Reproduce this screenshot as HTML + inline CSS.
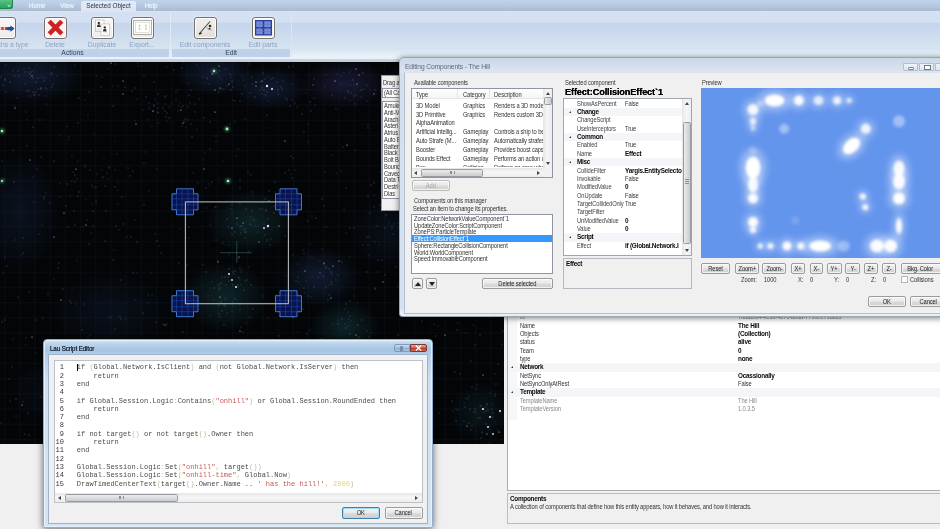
<!DOCTYPE html>
<html><head><meta charset="utf-8">
<style>
*{box-sizing:border-box;margin:0;padding:0}
html,body{width:940px;height:529px;overflow:hidden;background:#f0f0f0;font-family:"Liberation Sans",sans-serif;font-size:7px;color:#222}
.abs,.t,.b{position:absolute}
#root{position:relative;width:940px;height:529px;overflow:hidden;filter:blur(.35px)}
.t{transform:scaleX(.85);transform-origin:0 50%;white-space:nowrap;line-height:8px;height:8px;font-size:6.8px;letter-spacing:-.15px;color:#333}
.bd{font-weight:bold;color:#0a0a0a;transform:scaleX(.94)}
/* ribbon */
#tabbar{left:0;top:0;width:940px;height:11.500px;background:linear-gradient(#bfd4ec,#b3c6de 55%,#a7b7cb)}
#ribbon{left:0;top:11px;width:940px;height:50.500px;background:linear-gradient(#dbe7f5 0,#d5e1f2 1px,#d4e0f1 11px,#c5d5ec 12.500px,#cddbed 24px,#d7e4f0 38px,#e5f1f8 44px,#e9f2f9 47.500px,#ccd5e2 48px,#c4cedb 50.500px)}
.tab{top:.5px;height:11px;font-size:6.300px;color:#e6edf6;text-align:center;line-height:10px;text-shadow:0 0 1px #fff}
.tabsel{background:linear-gradient(#e3ebf5,#dbe5f3);color:#1d2b44;border-radius:2px 2px 0 0;text-shadow:none}
.grp{top:49px;height:8px;background:#bfd1e8;font-size:6.8px;text-align:center;line-height:8px;color:#30435e}
.ico{top:17.200px;width:23px;height:21.500px;border:1.200px solid #707276;border-radius:3px;background:linear-gradient(#f8f7f5,#eeece8);box-shadow:inset 0 0 0 1px #fff,0 0 1.500px rgba(255,255,255,.9)}
.ico svg{position:absolute;left:0;top:0}
.ilab{top:41px;font-size:6.8px;color:#8ba3c4;text-align:center;width:70px;line-height:8px;height:8px}
/* space */
#space{left:0;top:61.500px;width:504px;height:383px;background:#030507;overflow:hidden}
/* controls */
.btn{border:1px solid #9a9b9c;border-radius:2px;background:linear-gradient(#f2f2f2 0%,#e9e9e9 48%,#dbdbdb 52%,#d0d0d0 100%);box-shadow:inset 0 0 0 1px rgba(255,255,255,.7);font-size:6.800px;letter-spacing:-.15px;line-height:9.500px;text-align:center;color:#222;white-space:nowrap;overflow:hidden}
.sbv{background:linear-gradient(90deg,#e6e6e6,#f6f6f6 50%,#ececec)}
.sbh{background:linear-gradient(#e6e6e6,#f6f6f6 50%,#ececec)}
.thumb{border:1px solid #979aa0;border-radius:1.500px;background:linear-gradient(90deg,#ececec,#c9cbcf)}
.sbh+.thumb,.thumbh{background:linear-gradient(#ececec,#c9cbcf)}
.arr{width:0;height:0;border-left:2px solid transparent;border-right:2px solid transparent}
.arrh{width:0;height:0;border-top:2px solid transparent;border-bottom:2px solid transparent}
.code{font-family:"Liberation Mono",monospace;font-size:7px;color:#4a4a4a;white-space:normal;font-size:0}
.ln{height:8.340px;line-height:8.340px;white-space:pre;font-size:7px}
.no{display:inline-block;width:9px;margin-right:12.800px;text-align:right;color:#333}
.code i{font-style:normal;color:#c2bd98}.code b{font-weight:normal;color:#c85858}.code u{text-decoration:none;color:#dfcd92}
.s{display:inline-block;transform:scaleX(.85)}
</style></head><body><div id="root">

<!-- ===== SPACE VIEWPORT ===== -->
<div id="space" class="abs">
<svg width="504" height="383" viewBox="0 0 504 383" style="position:absolute;left:0;top:0">
<defs>
<radialGradient id="nb" cx="50%" cy="50%" r="50%"><stop offset="0" stop-color="#16243f" stop-opacity=".7"/><stop offset="1" stop-color="#1c2e4e" stop-opacity="0"/></radialGradient>
<radialGradient id="nt" cx="50%" cy="50%" r="50%"><stop offset="0" stop-color="#123034" stop-opacity=".7"/><stop offset="1" stop-color="#16363a" stop-opacity="0"/></radialGradient>
<radialGradient id="np" cx="50%" cy="50%" r="50%"><stop offset="0" stop-color="#23234a" stop-opacity=".65"/><stop offset="1" stop-color="#2a2a55" stop-opacity="0"/></radialGradient>
<pattern id="grid" width="15.200" height="15.200" x="4" y="12" patternUnits="userSpaceOnUse"><path d="M0 .5H15.200M.5 0V15.200" stroke="#182338" stroke-width=".7" opacity=".32" fill="none"/></pattern>
<g id="cube">
<path d="M-8.500 -13h17v5h4.500v16h-4.500v5h-17v-5h-4.500v-16h4.500z" fill="#0c1a70" opacity=".68"/>
<path d="M-8.500 -13h17v5h4.500v16h-4.500v5h-17v-5h-4.500v-16h4.500z" fill="none" stroke="#4682dc" stroke-width="1" opacity=".9"/>
<path d="M-8.500 -8h17v16h-17zM-13 -3h26M-13 3h26M-3 -13v26M3 -13v26M-8.500 -8l-4.500 0M8.500 8h4.500" fill="none" stroke="#2a58bc" stroke-width=".7" opacity=".6"/>
</g>
</defs>
<ellipse cx="30" cy="14" rx="55" ry="28" fill="url(#nb)"/>
<ellipse cx="215" cy="12" rx="40" ry="22" fill="url(#nb)"/>
<ellipse cx="270" cy="26" rx="38" ry="22" fill="url(#nb)"/>
<ellipse cx="345" cy="22" rx="45" ry="24" fill="url(#np)"/>
<ellipse cx="440" cy="20" rx="60" ry="26" fill="url(#nb)"/>
<ellipse cx="20" cy="150" rx="40" ry="60" fill="url(#nb)" opacity=".6"/>
<ellipse cx="110" cy="250" rx="60" ry="40" fill="url(#nb)" opacity=".5"/>
<ellipse cx="250" cy="160" rx="45" ry="32" fill="url(#nt)"/>
<ellipse cx="225" cy="235" rx="45" ry="35" fill="url(#nt)"/>
<ellipse cx="320" cy="215" rx="40" ry="30" fill="url(#nb)"/>
<ellipse cx="345" cy="265" rx="35" ry="28" fill="url(#nt)"/>
<ellipse cx="80" cy="330" rx="70" ry="40" fill="url(#nb)" opacity=".6"/>
<ellipse cx="400" cy="170" rx="50" ry="40" fill="url(#nb)" opacity=".5"/>
<ellipse cx="480" cy="350" rx="32" ry="30" fill="url(#nt)" opacity=".6"/>
<ellipse cx="380" cy="330" rx="50" ry="30" fill="url(#nb)" opacity=".6"/>
<rect width="504" height="383" fill="url(#grid)"/>
<path d="M327 345h0M289 5h0M80 305h0M311 49h0M439 80h0M495 334h0M487 342h0M182 64h0M2 260h0M29 373h0M378 324h0M5 18h0M469 361h0M275 120h0M89 30h0M347 382h0M28 351h0M249 321h0M75 324h0M368 183h0M204 56h0M252 130h0M183 270h0M363 11h0M222 249h0M346 242h0M238 87h0M67 122h0M120 346h0M58 318h0M18 235h0M410 246h0M177 342h0M189 165h0M147 372h0M7 204h0M471 299h0M60 291h0M269 129h0M267 178h0M375 226h0M448 209h0M429 75h0M350 166h0M393 349h0M409 26h0M503 269h0M480 273h0M147 352h0M308 159h0M314 17h0M191 28h0M68 165h0M133 211h0M378 198h0M43 256h0M63 227h0M442 184h0M343 85h0M70 239h0M176 148h0M199 37h0M242 291h0M216 178h0M78 61h0M194 337h0M128 106h0M16 354h0M238 362h0M368 63h0M13 88h0M202 373h0M157 179h0M369 275h0M499 199h0M248 358h0M154 20h0M203 203h0M245 219h0M113 44h0M158 50h0M291 94h0M353 18h0M144 143h0M367 269h0M409 146h0M33 65h0M341 109h0M385 213h0M26 50h0M116 164h0M417 278h0M489 228h0M410 161h0M109 106h0M122 135h0M312 154h0M419 188h0M314 307h0M93 149h0M14 120h0M342 200h0M39 33h0M155 356h0M274 151h0M279 274h0M447 81h0M456 116h0M305 370h0M304 70h0M421 367h0M240 39h0M79 36h0M315 370h0M52 25h0M274 144h0M120 255h0M496 207h0M471 35h0M182 6h0M223 181h0M381 342h0M137 180h0M336 47h0M231 28h0M452 339h0M302 52h0M464 359h0M93 164h0M354 34h0M324 144h0M121 218h0M275 280h0M243 270h0M308 304h0M252 15h0M174 8h0M30 34h0M72 371h0M196 241h0M452 68h0M249 334h0M308 234h0M478 43h0M345 36h0M130 114h0M235 60h0M133 363h0M44 135h0M460 56h0M395 320h0M54 99h0M323 366h0M388 129h0M25 372h0M321 277h0M206 126h0M438 24h0M452 194h0M210 87h0M285 111h0M58 206h0M267 53h0M143 285h0M67 64h0M82 268h0M293 96h0M26 276h0M463 108h0M209 374h0M1 361h0M422 259h0M310 305h0M389 321h0M270 183h0M194 247h0M224 263h0M131 322h0M101 25h0M50 141h0M227 157h0M96 125h0M344 295h0M269 322h0M48 232h0M73 110h0M75 163h0M40 58h0M415 88h0M156 260h0M462 244h0M36 258h0M146 35h0M469 112h0M174 362h0M439 22h0M443 117h0M304 226h0M225 281h0M143 251h0M230 62h0M89 182h0M367 175h0M392 117h0M23 191h0M265 17h0M498 302h0M230 12h0M97 377h0M125 25h0M421 300h0M85 103h0M460 213h0M289 108h0M131 175h0M41 95h0M375 227h0M431 303h0M115 2h0M104 353h0M348 30h0M235 209h0M263 321h0M303 247h0M225 215h0M51 356h0M251 113h0M459 30h0M350 239h0M167 262h0M405 317h0M161 191h0M96 356h0M150 311h0M240 126h0M183 0h0M475 136h0M59 201h0M73 301h0M458 348h0M498 212h0M123 162h0M263 140h0M5 258h0M422 227h0M243 339h0M458 261h0M175 132h0M113 198h0M16 337h0M216 74h0M23 176h0M322 137h0M398 273h0M210 60h0M346 126h0M457 268h0M307 272h0M371 123h0M132 29h0M290 44h0M368 134h0M292 116h0M316 156h0M344 148h0M1 15h0M27 29h0M10 20h0M52 12h0M36 20h0M34 33h0M14 14h0M38 16h0M54 5h0M31 10h0M44 19h0M6 30h0M45 16h0M41 27h0M158 51h0M167 51h0M158 46h0M149 41h0M163 46h0M165 35h0M165 49h0M169 56h0M166 55h0M158 32h0M183 44h0M176 38h0M188 58h0M189 33h0M176 30h0M191 62h0M178 49h0M192 75h0M227 24h0M213 11h0M250 2h0M252 22h0M255 35h0M267 30h0M277 20h0M262 25h0M264 28h0M292 22h0M263 11h0M282 27h0M242 32h0M272 26h0M287 38h0M281 25h0M233 25h0M351 31h0M355 42h0M332 33h0M462 28h0M420 21h0M424 23h0M434 24h0M460 17h0M441 38h0M449 30h0M434 20h0M468 17h0M414 27h0M420 30h0M412 21h0M455 19h0M467 32h0M411 22h0M254 158h0M215 145h0M240 164h0M246 170h0M245 167h0M265 137h0M245 170h0M264 162h0M245 176h0M235 170h0M246 147h0M252 149h0M232 143h0M242 164h0M268 157h0M241 171h0M258 170h0M266 148h0M220 255h0M229 207h0M214 226h0M219 243h0M235 237h0M224 243h0M253 247h0M221 240h0M225 244h0M247 218h0M251 223h0M239 216h0M220 226h0M234 212h0M206 210h0M219 252h0M233 210h0M238 223h0M244 228h0M250 255h0M228 215h0M219 228h0M222 215h0M208 234h0M326 225h0M328 238h0M296 219h0M298 202h0M320 211h0M331 210h0M323 214h0M324 202h0M362 258h0M344 286h0M359 275h0M350 272h0M342 257h0M333 287h0M344 278h0M486 362h0M493 351h0M472 325h0M471 368h0M486 349h0M460 312h0M493 355h0M465 345h0M456 359h0M475 347h0M470 347h0M480 356h0M488 348h0M478 356h0M106 149h0M105 124h0M90 108h0M78 134h0M115 125h0M96 140h0M74 149h0M75 113h0M79 130h0M92 124h0M66 144h0M134 356h0M116 327h0M111 337h0M41 335h0M113 329h0M127 341h0M82 331h0M121 330h0M91 328h0M122 340h0M123 337h0M124 352h0M151 313h0M136 332h0M128 340h0M105 332h0M399 165h0M407 147h0M385 166h0M374 121h0M370 151h0M417 183h0M404 148h0M405 181h0M423 216h0M354 166h0M396 205h0M430 177h0M386 153h0M395 137h0M326 337h0M398 330h0M353 312h0M379 326h0M347 318h0M372 292h0M356 327h0M346 300h0M317 319h0M364 310h0M361 357h0M332 325h0M404 314h0M455 310h0M406 300h0" stroke="#cfd6f5" stroke-width="0.8" stroke-linecap="round" opacity="0.55" fill="none"/>
<path d="M416 175h0M397 41h0M293 255h0M204 107h0M483 313h0M61 238h0M460 148h0M123 19h0M30 98h0M123 32h0M383 220h0M232 166h0M243 338h0M240 269h0M374 32h0M262 19h0M256 20h0M501 83h0M285 79h0M133 336h0M280 254h0M32 275h0M498 208h0M473 178h0M442 51h0M430 253h0M54 175h0M111 1h0M151 279h0M347 83h0M445 273h0M241 308h0M86 163h0M48 280h0M259 180h0M76 107h0M165 263h0M426 218h0M331 236h0M215 50h0M220 235h0M136 62h0M22 343h0M15 46h0M335 19h0M479 134h0M115 280h0M32 14h0M153 49h0M181 48h0M183 61h0M220 26h0M212 12h0M219 4h0M229 22h0M219 4h0M215 28h0M256 24h0M356 7h0M357 22h0M359 13h0M429 22h0M448 15h0M438 26h0M243 161h0M269 139h0M279 164h0M237 156h0M239 195h0M218 200h0M305 209h0M339 199h0M324 201h0M333 204h0M356 273h0M487 372h0M467 364h0M499 370h0M64 151h0M86 327h0M96 304h0M153 308h0M119 326h0M121 332h0M418 162h0M444 115h0M421 293h0" stroke="#ffffff" stroke-width="1.1" stroke-linecap="round" opacity="0.85" fill="none"/>
<path d="M236 94h0M485 207h0M103 360h0M33 115h0M156 313h0M159 184h0M397 140h0M46 131h0M24 378h0M205 91h0M369 364h0M492 174h0M498 368h0M245 295h0M148 362h0M293 4h0M126 257h0M175 247h0M482 198h0M241 265h0M314 297h0M97 14h0M192 234h0M275 130h0M72 228h0M482 371h0M54 217h0M484 350h0M131 376h0M248 110h0M148 233h0M325 231h0M392 164h0M357 242h0M241 210h0M167 59h0M413 303h0M424 84h0M189 21h0M76 242h0M459 213h0M118 142h0M90 273h0M401 11h0M118 128h0M218 326h0M299 220h0M237 341h0M145 90h0M473 263h0M337 111h0M207 17h0M490 69h0M158 41h0M108 7h0M280 343h0M433 364h0M167 5h0M267 66h0M387 359h0M493 13h0M85 38h0M5 196h0M349 257h0M403 139h0M293 291h0M347 321h0M308 80h0M197 68h0M453 349h0M195 42h0M113 24h0M418 336h0M210 163h0M15 44h0M300 248h0M367 24h0M189 176h0M301 143h0M36 291h0M149 45h0M193 111h0M351 302h0M137 37h0M231 147h0M141 366h0M392 166h0M455 247h0M389 160h0M187 203h0M39 172h0M70 134h0M139 300h0M132 318h0M26 283h0M297 45h0M363 27h0M214 238h0M88 53h0M346 171h0M448 101h0M319 323h0M216 80h0M463 146h0M462 220h0M237 291h0M68 78h0M385 129h0M330 290h0M369 193h0M120 318h0M138 4h0M293 285h0M219 117h0M405 183h0M314 320h0M361 326h0M230 294h0M210 253h0M463 233h0M412 27h0M111 255h0M262 32h0M173 80h0M253 133h0M34 31h0M502 50h0M203 98h0M332 93h0M88 276h0M429 279h0M198 121h0M75 3h0M115 79h0M295 108h0M298 270h0M246 334h0M374 133h0M282 232h0M157 107h0M223 99h0M245 57h0M363 183h0M388 366h0M22 193h0M311 235h0M466 271h0M355 88h0M114 188h0M364 293h0M474 170h0M500 124h0M433 56h0M268 256h0M249 189h0M148 241h0M221 293h0M3 118h0M42 163h0M120 382h0M264 258h0M118 120h0M106 326h0M291 112h0M118 24h0M422 358h0M37 107h0M310 182h0M141 299h0M152 233h0M246 261h0M469 238h0M13 9h0M180 167h0M498 70h0M419 110h0M167 375h0M238 215h0M250 162h0M187 291h0M62 366h0M377 210h0M109 256h0M138 1h0M304 191h0M86 137h0M30 12h0M6 3h0M41 26h0M16 13h0M37 3h0M33 9h0M30 12h0M38 27h0M46 34h0M143 48h0M148 58h0M153 49h0M172 41h0M185 60h0M173 61h0M184 59h0M180 41h0M181 45h0M186 65h0M178 44h0M242 14h0M197 3h0M203 15h0M217 11h0M219 14h0M205 21h0M224 27h0M219 30h0M232 20h0M268 39h0M268 15h0M306 31h0M265 33h0M244 18h0M350 38h0M326 13h0M341 22h0M366 22h0M325 25h0M350 9h0M354 23h0M341 14h0M349 11h0M337 12h0M361 35h0M344 11h0M441 13h0M432 20h0M460 20h0M411 2h0M424 20h0M404 24h0M430 11h0M444 26h0M438 18h0M410 18h0M437 22h0M474 22h0M439 3h0M433 12h0M260 147h0M262 147h0M207 146h0M216 159h0M241 165h0M283 141h0M264 167h0M229 183h0M216 145h0M251 163h0M251 155h0M212 220h0M229 193h0M242 208h0M221 221h0M238 197h0M240 218h0M226 223h0M233 244h0M221 221h0M320 199h0M306 219h0M312 215h0M329 223h0M326 206h0M305 231h0M345 247h0M348 250h0M351 259h0M344 279h0M358 276h0M338 258h0M345 262h0M357 263h0M333 262h0M354 234h0M497 322h0M495 360h0M487 342h0M492 342h0M490 331h0M490 364h0M489 381h0M489 368h0M495 332h0M482 370h0M469 334h0M456 347h0M464 341h0M500 351h0M72 94h0M103 116h0M83 165h0M60 135h0M92 142h0M102 108h0M104 96h0M119 168h0M78 99h0M94 72h0M60 73h0M90 89h0M109 105h0M44 137h0M155 313h0M116 332h0M151 347h0M172 355h0M48 320h0M144 341h0M112 353h0M93 329h0M101 350h0M152 358h0M77 328h0M398 161h0M380 110h0M375 180h0M427 191h0M425 213h0M422 209h0M426 140h0M393 172h0M379 183h0M402 161h0M334 288h0M359 309h0M391 294h0M405 331h0M388 334h0M360 318h0M412 323h0M397 376h0M405 310h0" stroke="#8ea4e0" stroke-width="0.8" stroke-linecap="round" opacity="0.5" fill="none"/>
<path d="M314 284h0M141 351h0M481 75h0M179 201h0M54 287h0M182 301h0M350 254h0M412 248h0M368 66h0M490 255h0M419 248h0M3 23h0M44 296h0M212 120h0M225 359h0M283 137h0M454 76h0M361 28h0M84 242h0M310 40h0M371 313h0M409 2h0M18 9h0M380 143h0M5 17h0M425 46h0M91 361h0M235 39h0M463 125h0M249 0h0M188 229h0M29 6h0M12 305h0M434 262h0M439 351h0M29 230h0M162 328h0M144 101h0M144 14h0M313 23h0M482 32h0M329 207h0M381 128h0M75 120h0M361 282h0M240 118h0M454 188h0M99 283h0M477 168h0M411 286h0M195 50h0M25 10h0M29 29h0M42 15h0M19 14h0M154 44h0M154 43h0M135 26h0M190 41h0M207 16h0M273 16h0M250 31h0M278 28h0M245 24h0M286 36h0M356 33h0M429 10h0M459 27h0M457 4h0M237 162h0M243 168h0M232 172h0M267 165h0M229 219h0M219 223h0M240 206h0M332 222h0M367 210h0M298 215h0M314 225h0M338 213h0M331 220h0M481 376h0M474 350h0M481 344h0M468 337h0M105 179h0M189 313h0M130 317h0M126 317h0M377 164h0M430 187h0M425 327h0" stroke="#7fd0b4" stroke-width="0.9" stroke-linecap="round" opacity="0.55" fill="none"/>
<path d="M228 383h0M137 300h0M417 134h0M71 241h0M148 299h0M418 25h0M290 284h0M102 15h0M47 27h0M464 229h0M155 172h0M495 322h0M163 262h0M338 366h0M135 238h0M115 267h0M149 129h0M208 335h0M151 211h0M232 249h0M382 198h0M249 205h0M225 237h0M322 187h0M102 373h0M84 365h0M233 38h0M350 195h0M424 237h0M315 43h0M474 149h0M293 193h0M5 117h0M482 187h0M115 108h0M336 218h0M35 33h0M91 171h0M68 363h0M325 110h0M28 10h0M53 22h0M33 16h0M47 42h0M51 11h0M169 45h0M166 34h0M178 28h0M231 15h0M220 9h0M226 7h0M260 28h0M271 17h0M295 41h0M313 23h0M448 20h0M453 4h0M429 15h0M232 152h0M285 174h0M233 240h0M240 248h0M312 196h0M288 214h0M348 264h0M338 261h0M371 271h0M358 263h0M492 347h0M480 344h0M477 323h0M486 345h0M85 105h0M117 92h0M108 117h0M155 354h0M60 340h0M124 366h0M401 196h0M374 145h0M402 157h0" stroke="#b8a8f0" stroke-width="0.8" stroke-linecap="round" opacity="0.5" fill="none"/>
<path d="M475 283h0M15 178h0M433 14h0M463 130h0M438 264h0M84 320h0M209 122h0M135 59h0M127 175h0M13 277h0M303 188h0M27 58h0M121 257h0M326 165h0M315 278h0M412 251h0M60 121h0M495 312h0M452 92h0M429 247h0M359 354h0M250 369h0M178 282h0M27 84h0M461 145h0M394 162h0M9 317h0M77 199h0M241 223h0M227 251h0M472 364h0M152 64h0M266 149h0M258 357h0M137 211h0M367 39h0M10 339h0M3 211h0M420 125h0M55 289h0M187 300h0M87 158h0M308 62h0M502 283h0M310 268h0M215 350h0M436 274h0M283 19h0M440 122h0M2 99h0M229 119h0M23 340h0M494 124h0M135 158h0M301 288h0M57 14h0M86 339h0M293 229h0M313 327h0M398 225h0M276 233h0M24 7h0M41 26h0M36 30h0M33 30h0M25 22h0M45 26h0M17 36h0M158 61h0M165 42h0M150 47h0M155 37h0M188 45h0M185 57h0M222 27h0M232 19h0M221 17h0M209 22h0M292 38h0M260 20h0M278 32h0M266 34h0M262 27h0M348 29h0M350 23h0M314 36h0M375 28h0M407 22h0M435 24h0M240 142h0M265 173h0M229 165h0M258 164h0M255 164h0M271 177h0M218 199h0M240 242h0M233 223h0M238 225h0M263 234h0M320 211h0M329 233h0M332 212h0M318 215h0M350 279h0M346 266h0M338 262h0M476 350h0M476 327h0M466 336h0M94 126h0M72 119h0M97 112h0M34 140h0M69 75h0M96 138h0M133 109h0M107 111h0M103 115h0M77 117h0M116 341h0M326 205h0M369 175h0M397 144h0M409 167h0M345 333h0M409 294h0M372 316h0M365 314h0" stroke="#6f86ff" stroke-width="0.9" stroke-linecap="round" opacity="0.6" fill="none"/>
<g fill="#5fd890" opacity=".35" style="filter:blur(1px)"><circle cx="2" cy="69" r="3"/><circle cx="227" cy="67" r="3"/><circle cx="228" cy="119" r="3"/><circle cx="214" cy="9" r="2.500"/><circle cx="2" cy="119" r="2.500"/></g>
<g fill="#9ff0b0"><circle cx="2" cy="69" r="1.3"/><circle cx="227" cy="67" r="1.4"/><circle cx="228" cy="119" r="1.3"/><circle cx="214" cy="9" r="1.2"/><circle cx="2" cy="119" r="1.1"/></g>
<g fill="#e8e0ff"><circle cx="267" cy="24" r="1.2"/><circle cx="272" cy="27" r="1"/><circle cx="268" cy="164" r="1.2"/><circle cx="264" cy="166" r=".9"/><circle cx="229" cy="212" r="1"/><circle cx="236" cy="225" r="1"/><circle cx="232" cy="218" r=".9"/><circle cx="483" cy="347" r="1.1"/><circle cx="490" cy="355" r="1"/><circle cx="488" cy="365" r="1"/><circle cx="500" cy="349" r="1"/><circle cx="493" cy="372" r=".9"/></g>
<!-- selection square + crosshair -->
<path d="M220 190.700h32M236.800 179v22" stroke="#3d6a6a" stroke-width=".8" opacity=".75" fill="none"/>
<use href="#cube" x="185" y="139.800"/><use href="#cube" x="288.500" y="139.800"/><use href="#cube" x="185" y="241.700"/><use href="#cube" x="288.500" y="241.700"/>
<rect x="185.400" y="139.900" width="103" height="101.800" fill="none" stroke="#b4b8be" stroke-width="1.1"/>
</svg>
</div>

<!-- ===== background property grid ===== -->
<div class="abs" style="left:503.500px;top:61px;width:437px;height:468px;background:#f0f0f0"></div>
<div class="abs" style="left:0;top:443.700px;width:504px;height:86px;background:#f0f0f0"></div>
<div class="abs" style="left:507px;top:300px;width:433px;height:191px;background:#fff;border-left:1px solid #a9adb5;border-bottom:1px solid #a9adb5"></div>
<div class="abs" style="left:508px;top:300px;width:9px;height:120px;background:#f6f7f9"></div>
<div class="t" style="left:519.500px;top:313.2px;color:#8a8a8a">Id</div>
<div class="t" style="left:737.500px;top:313.2px;color:#8a8a8a">7f6aa0d4-4e3d-467c-8bda-7790ee798cc5</div>
<div class="t" style="left:519.500px;top:321.6px;color:#333">Name</div>
<div class="t bd" style="left:737.500px;top:321.6px;letter-spacing:-.25px">The Hill</div>
<div class="t" style="left:519.500px;top:329.9px;color:#333">Objects</div>
<div class="t bd" style="left:737.500px;top:329.9px;letter-spacing:-.25px">(Collection)</div>
<div class="t" style="left:519.500px;top:338.3px;color:#333">status</div>
<div class="t bd" style="left:737.500px;top:338.3px;letter-spacing:-.25px">alive</div>
<div class="t" style="left:519.500px;top:346.6px;color:#333">Team</div>
<div class="t bd" style="left:737.500px;top:346.6px;letter-spacing:-.25px">0</div>
<div class="t" style="left:519.500px;top:355.0px;color:#333">type</div>
<div class="t bd" style="left:737.500px;top:355.0px;letter-spacing:-.25px">none</div>
<div class="abs" style="left:508px;top:363.2px;width:432px;height:8.400px;background:#f4f5f8"></div>
<div class="abs" style="left:510.500px;top:366.4px;border:1.600px solid transparent;border-bottom-color:#333;border-right-color:#333;width:0;height:0"></div>
<div class="t bd" style="left:519.500px;top:363.4px;letter-spacing:-.3px">Network</div>
<div class="t" style="left:519.500px;top:371.7px;color:#333">NetSync</div>
<div class="t bd" style="left:737.500px;top:371.7px;letter-spacing:-.25px">Ocassionally</div>
<div class="t" style="left:519.500px;top:380.1px;color:#333">NetSyncOnlyAtRest</div>
<div class="t" style="left:737.500px;top:380.1px;color:#333">False</div>
<div class="abs" style="left:508px;top:388.2px;width:432px;height:8.400px;background:#f4f5f8"></div>
<div class="abs" style="left:510.500px;top:391.4px;border:1.600px solid transparent;border-bottom-color:#333;border-right-color:#333;width:0;height:0"></div>
<div class="t bd" style="left:519.500px;top:388.4px;letter-spacing:-.3px">Template</div>
<div class="t" style="left:519.500px;top:396.8px;color:#8a8a8a">TemplateName</div>
<div class="t" style="left:737.500px;top:396.8px;color:#8a8a8a">The Hill</div>
<div class="t" style="left:519.500px;top:405.2px;color:#8a8a8a">TemplateVersion</div>
<div class="t" style="left:737.500px;top:405.2px;color:#8a8a8a">1.0.3.5</div>
<div class="abs" style="left:507px;top:492.500px;width:433px;height:31px;background:#f0f0f0;border:1px solid #b9bcc3;border-right:none"></div>
<div class="t bd" style="left:509.500px;top:494.500px;letter-spacing:-.3px">Components</div>
<div class="t" style="left:509.500px;top:502.800px">A collection of components that define how this entity appears, how it behaves, and how it interacts.</div>
<!-- ===== RIBBON ===== -->
<div id="tabbar" class="abs"></div>
<div id="ribbon" class="abs"></div>
<div class="abs" style="left:0;top:0;width:13px;height:9px;background:linear-gradient(#58c486,#2f9e62);border-radius:0 0 3px 0;border:1px solid #178a49;border-left:none;border-top:none"></div>
<div class="abs" style="left:7px;top:2.500px;width:4px;height:4px;border:1px solid #d9ffe8;border-top:none;border-left:none;transform:rotate(45deg) scale(.6)"></div>
<div class="abs tab" style="left:22px;width:30px">Home</div>
<div class="abs tab" style="left:55px;width:24px">View</div>
<div class="abs tab tabsel" style="left:81px;width:55px">Selected Object</div>
<div class="abs tab" style="left:140px;width:22px">Help</div>

<div class="abs grp" style="left:0;width:169px;padding-right:24px">Actions</div>
<div class="abs grp" style="left:172px;width:118px">Edit</div>
<div class="abs" style="left:170px;top:13px;width:1px;height:44px;background:#e2ebf6"></div>
<div class="abs" style="left:291px;top:13px;width:1px;height:44px;background:#dbe5f3"></div>

<div class="abs ico" style="left:-7.500px"><svg width="21" height="19" viewBox="0 0 21 19"><path d="M0 10.600h15" stroke="#e23a3a" stroke-width="3" stroke-dasharray="2.600 1"/><path d="M14 10.600h4" stroke="#1f4a9c" stroke-width="3.200" stroke-linecap="round"/><path d="M16.500 7.500l4 3.100-4 3.100z" fill="#1f4a9c"/></svg></div>
<div class="abs ico" style="left:44px;background:#faf2f1"><svg width="21" height="19" viewBox="0 0 21 19"><path d="M4.200 3.300l12.600 12.600M16.800 3.300l-12.600 12.600" stroke="#cc2222" stroke-width="4.400"/></svg></div>
<div class="abs ico" style="left:91.200px"><svg width="21" height="19" viewBox="0 0 21 19"><rect x="3.500" y="2" width="8.500" height="11.500" fill="#fff" stroke="#bdbcb6" stroke-width=".7"/><rect x="9" y="6" width="8.500" height="11.500" fill="#fff" stroke="#bdbcb6" stroke-width=".7"/><circle cx="6.800" cy="5" r="1.200" fill="#333"/><path d="M4.800 9l.8-2.400h2.400l.8 2.400z" fill="#333"/><circle cx="12.800" cy="9.400" r="1.200" fill="#333"/><path d="M10.800 13.400l.8-2.400h2.400l.8 2.400z" fill="#333"/><path d="M4.500 11h4M4.500 12.300h3M11 15h5" stroke="#c9c8c2" stroke-width=".6"/></svg></div>
<div class="abs ico" style="left:131.200px"><svg width="21" height="19" viewBox="0 0 21 19"><rect x="1.500" y="2.500" width="18" height="14" fill="#fbfbfa" stroke="#a9a8a4" stroke-width=".9"/><rect x="3.500" y="4.500" width="14" height="10" fill="#fff" stroke="#d4d3cf" stroke-width=".7"/><path d="M7.500 6.500v6M14 6.500v6" stroke="#cdbcbc" stroke-width="1.300" stroke-dasharray="2.200 1"/></svg></div>
<div class="abs ico" style="left:194.200px;background:linear-gradient(#f1f0ec,#e2e0d9)"><svg width="21" height="19" viewBox="0 0 21 19"><path d="M4.500 15.500L15 3.500" stroke="#4a4a44" stroke-width="1.100"/><path d="M4 16l2.500-1" stroke="#222" stroke-width="1.500"/><circle cx="15" cy="8" r="1.300" fill="#222"/><circle cx="14.500" cy="10.800" r="1" fill="#333"/><path d="M11.500 9.500q2 2.500 5 2.500" stroke="#8a8a80" stroke-width=".9" fill="none"/></svg></div>
<div class="abs ico" style="left:251.800px"><svg width="21" height="19" viewBox="0 0 21 19"><rect x="2" y="2" width="17" height="15.500" fill="#2f3f92"/><rect x="3.300" y="3.300" width="6.300" height="5.700" fill="#7a8fe0"/><rect x="11.300" y="3.300" width="6.300" height="5.700" fill="#7a8fe0"/><rect x="3.300" y="10.500" width="6.300" height="5.700" fill="#7a8fe0"/><rect x="11.300" y="10.500" width="6.300" height="5.700" fill="#7a8fe0"/><path d="M6.400 3.300v13M14.400 3.300v13M3.300 6.200h14.400M3.300 13.300h14.400" stroke="#6076cc" stroke-width=".6"/></svg></div>

<div class="abs ilab" style="left:-22px">chs a type</div>
<div class="abs ilab" style="left:20px">Delete</div>
<div class="abs ilab" style="left:67px">Duplicate</div>
<div class="abs ilab" style="left:107px">Export...</div>
<div class="abs ilab" style="left:170px">Edit components</div>
<div class="abs ilab" style="left:228px">Edit parts</div>

<!-- ===== Drag panel (behind dialog) ===== -->
<div class="abs" style="left:380.500px;top:75px;width:30px;height:136px;background:#f0f0f0;border:1px solid #9a9a9a"></div>
<div class="t" style="left:383px;top:78.600px">Drag a</div>
<div class="abs" style="left:382px;top:88px;width:30px;height:10px;background:#fff;border:1px solid #8f96a3"></div>
<div class="t" style="left:384px;top:89px">(All Ca</div>
<div class="abs" style="left:382px;top:101px;width:30px;height:98px;background:#fff;border:1px solid #8f96a3"></div>
<div class="t" style="left:384px;top:102.0px">Amukü</div>
<div class="t" style="left:384px;top:108.8px">Anti-M</div>
<div class="t" style="left:384px;top:115.5px">Arachi</div>
<div class="t" style="left:384px;top:122.2px">Asteri</div>
<div class="t" style="left:384px;top:129.0px">Atrius</div>
<div class="t" style="left:384px;top:135.8px">Auto E</div>
<div class="t" style="left:384px;top:142.5px">Batter</div>
<div class="t" style="left:384px;top:149.2px">Black</div>
<div class="t" style="left:384px;top:156.0px">Bolt Bi</div>
<div class="t" style="left:384px;top:162.8px">Bounc</div>
<div class="t" style="left:384px;top:169.5px">Cavec</div>
<div class="t" style="left:384px;top:176.2px">Data T</div>
<div class="t" style="left:384px;top:183.0px">Destri</div>
<div class="t" style="left:384px;top:189.8px">Dias</div>

<!-- ===== Editing Components dialog ===== -->
<div id="dlg" class="abs" style="left:399px;top:57px;width:560px;height:260px;background:linear-gradient(#cdd8e6,#d2dcea 6px,#dde5f2 14px,#d5e0ef 15px,#d5e1f0 250px,#e6edf6 254px,#e9eff7);border:1px solid #9aa5b4;border-radius:4px 0 0 3px;box-shadow:0 1px 6px rgba(0,0,0,.55)"></div>
<div class="abs" style="left:404px;top:72px;width:540px;height:241.500px;background:#f0f0f0;border-left:1px solid #b4bfce;border-top:1px solid #dde3ec;border-bottom:1px solid #b4bfce"></div>
<div class="t" style="left:405px;top:62.500px;color:#5a6a80;font-size:7px;transform:scaleX(.96)">Editing Components - The Hill</div>
<div class="abs" style="left:903px;top:63px;width:15px;height:8px;border:1px solid #b3bfd0;border-radius:0 0 0 2px;background:linear-gradient(#eef3f9,#dde5f0)"></div>
<div class="abs" style="left:907.500px;top:67px;width:6px;height:2.500px;border:1px solid #7a8698;border-radius:1px;background:#fff"></div>
<div class="abs" style="left:919px;top:63px;width:15px;height:8px;border:1px solid #b3bfd0;background:linear-gradient(#eef3f9,#dde5f0)"></div>
<div class="abs" style="left:923.500px;top:64.500px;width:7px;height:5px;border:1px solid #6a7688;border-top-width:1.500px;background:#fff"></div>
<div class="abs" style="left:935px;top:63px;width:15px;height:8px;border:1px solid #b3bfd0;background:linear-gradient(#eef3f9,#dde5f0)"></div>
<div class="t" style="left:414px;top:78.800px">Available components</div>
<div class="abs" style="left:411px;top:88px;width:142px;height:90px;background:#fff;border:1px solid #8f96a3"></div>
<div class="abs" style="left:412px;top:89px;width:131px;height:10px;background:linear-gradient(#fff,#f4f5f7);border-bottom:1px solid #e3e5ea"></div>
<div class="abs" style="left:457px;top:89px;width:1px;height:10px;background:#e3e5ea"></div><div class="abs" style="left:489px;top:89px;width:1px;height:10px;background:#e3e5ea"></div>
<div class="abs" style="left:412px;top:89.600px;width:131px;height:77.400px;overflow:hidden">
<div class="t" style="left:4px;top:1px">Type</div><div class="t" style="left:50.500px;top:1px">Category</div><div class="t" style="left:82px;top:1px;width:58px;overflow:hidden">Description</div>
<div class="t" style="left:4px;top:12px">3D Model</div><div class="t" style="left:50.500px;top:12px">Graphics</div><div class="t" style="left:82px;top:12px;width:58px;overflow:hidden">Renders a 3D mode</div>
<div class="t" style="left:4px;top:21px">3D Primitive</div><div class="t" style="left:50.500px;top:21px">Graphics</div><div class="t" style="left:82px;top:21px;width:58px;overflow:hidden">Renders custom 3D</div>
<div class="t" style="left:4px;top:29.799999999999997px">AlphaAnimation</div><div class="t" style="left:50.500px;top:29.799999999999997px"></div><div class="t" style="left:82px;top:29.799999999999997px;width:58px;overflow:hidden"></div>
<div class="t" style="left:4px;top:38.7px">Artificial Intellig...</div><div class="t" style="left:50.500px;top:38.7px">Gameplay</div><div class="t" style="left:82px;top:38.7px;width:58px;overflow:hidden">Controls a ship to be</div>
<div class="t" style="left:4px;top:47.599999999999994px">Auto Strafe (M...</div><div class="t" style="left:50.500px;top:47.599999999999994px">Gameplay</div><div class="t" style="left:82px;top:47.599999999999994px;width:58px;overflow:hidden">Automatically strafes</div>
<div class="t" style="left:4px;top:56.400000000000006px">Booster</div><div class="t" style="left:50.500px;top:56.400000000000006px">Gameplay</div><div class="t" style="left:82px;top:56.400000000000006px;width:58px;overflow:hidden">Provides boost caps</div>
<div class="t" style="left:4px;top:65.19999999999999px">Bounds Effect</div><div class="t" style="left:50.500px;top:65.19999999999999px">Gameplay</div><div class="t" style="left:82px;top:65.19999999999999px;width:58px;overflow:hidden">Performs an action c</div>
<div class="t" style="left:4px;top:74px">Box</div><div class="t" style="left:50.500px;top:74px">Collision</div><div class="t" style="left:82px;top:74px;width:58px;overflow:hidden">Defines an area wher</div>
</div>
<div class="abs sbv" style="left:543px;top:89px;width:9px;height:79px"></div>
<div class="abs arr" style="left:545.500px;top:92px;border-bottom:3px solid #444"></div>
<div class="abs arr" style="left:545.500px;top:162px;border-top:3px solid #444"></div>
<div class="abs thumb" style="left:544px;top:97px;width:8px;height:8px"></div>
<div class="abs sbh" style="left:412px;top:168px;width:131px;height:9px"></div>
<div class="abs thumb" style="left:421px;top:168.500px;width:62px;height:8px"></div>
<div class="abs" style="left:450px;top:171px;width:5px;height:3px;border-left:1px solid #8a8f98;border-right:1px solid #8a8f98;box-shadow:inset 2px 0 0 -1px #8a8f98"></div>
<div class="abs arrh" style="left:414px;top:170.500px;border-right:3px solid #444"></div>
<div class="abs arrh" style="left:537px;top:170.500px;border-left:3px solid #444"></div>
<div class="abs" style="left:543px;top:168px;width:9px;height:9px;background:#f0f0f0"></div>
<div class="abs btn" style="left:412px;top:180px;width:38px;height:11px;color:#a9a9a9;border-color:#bcbcbc"><span class="s">Add</span></div>
<div class="t" style="left:413.500px;top:196.500px">Components on this manager</div>
<div class="t" style="left:412.500px;top:205px">Select an item to change its properties.</div>
<div class="abs" style="left:411px;top:214px;width:142px;height:60px;background:#fff;border:1px solid #8f96a3"></div>
<div class="t" style="left:413.500px;top:214.8px">ZoneColor:NetworkValueComponent`1</div>
<div class="t" style="left:413.500px;top:221.6px">UpdateZoneColor:ScriptComponent</div>
<div class="t" style="left:413.500px;top:228.3px">ZonePS:ParticleTemplate</div>
<div class="abs" style="left:412px;top:235.4px;width:140px;height:6.800px;background:#3399ff"></div>
<div class="t" style="left:413.500px;top:235.1px;color:#fff">Effect:CollisionEffect`1</div>
<div class="t" style="left:413.500px;top:241.8px">Sphere:RectangleCollisionComponent</div>
<div class="t" style="left:413.500px;top:248.6px">World:WorldComponent</div>
<div class="t" style="left:413.500px;top:255.3px">Speed:ImmovableComponent</div>
<div class="abs btn" style="left:412px;top:278px;width:11px;height:11px"></div><div class="abs arr" style="left:414.500px;top:281.500px;border-bottom:4px solid #222;border-left-width:3px;border-right-width:3px"></div>
<div class="abs btn" style="left:426px;top:278px;width:11px;height:11px"></div><div class="abs arr" style="left:428.500px;top:282px;border-top:4px solid #222;border-left-width:3px;border-right-width:3px"></div>
<div class="abs btn" style="left:482px;top:278px;width:71px;height:11px"><span class="s">Delete selected</span></div>
<!-- selected component property grid -->
<div class="t" style="left:564.500px;top:78.700px">Selected component</div>
<div class="t bd" style="left:564.500px;top:86px;font-size:9.800px;line-height:12px;height:12px;letter-spacing:-.15px;color:#000;transform:scaleX(.94);text-shadow:0 0 .3px #000">Effect:CollisionEffect`1</div>
<div class="abs" style="left:563px;top:98px;width:129px;height:158px;background:#fff;border:1px solid #a0a6b0"></div>
<div class="abs" style="left:564px;top:99px;width:118px;height:156px;overflow:hidden">
<div class="t" style="left:13px;top:0.6px;color:#444">ShowAsPercent</div>
<div class="t" style="left:61px;top:0.6px">False</div>
<div class="abs" style="left:0;top:8.8px;width:118px;height:8.400px;background:#f4f5f8"></div>
<div class="abs" style="left:4.500px;top:12.0px;border:1.600px solid transparent;border-bottom-color:#333;border-right-color:#333;width:0;height:0"></div>
<div class="t bd" style="left:13px;top:9.0px;letter-spacing:-.3px">Change</div>
<div class="t" style="left:13px;top:17.3px;color:#444">ChangeScript</div>
<div class="t" style="left:13px;top:25.7px;color:#444">UseInterceptors</div>
<div class="t" style="left:61px;top:25.7px">True</div>
<div class="abs" style="left:0;top:33.8px;width:118px;height:8.400px;background:#f4f5f8"></div>
<div class="abs" style="left:4.500px;top:37.0px;border:1.600px solid transparent;border-bottom-color:#333;border-right-color:#333;width:0;height:0"></div>
<div class="t bd" style="left:13px;top:34.0px;letter-spacing:-.3px">Common</div>
<div class="t" style="left:13px;top:42.4px;color:#444">Enabled</div>
<div class="t" style="left:61px;top:42.4px">True</div>
<div class="t" style="left:13px;top:50.8px;color:#444">Name</div>
<div class="t bd" style="left:61px;top:50.8px;letter-spacing:-.25px">Effect</div>
<div class="abs" style="left:0;top:58.9px;width:118px;height:8.400px;background:#f4f5f8"></div>
<div class="abs" style="left:4.500px;top:62.1px;border:1.600px solid transparent;border-bottom-color:#333;border-right-color:#333;width:0;height:0"></div>
<div class="t bd" style="left:13px;top:59.1px;letter-spacing:-.3px">Misc</div>
<div class="t" style="left:13px;top:67.5px;color:#444">CollideFilter</div>
<div class="t bd" style="left:61px;top:67.5px;letter-spacing:-.25px">Yargis.EntitySelecto</div>
<div class="t" style="left:13px;top:75.8px;color:#444">Invokable</div>
<div class="t" style="left:61px;top:75.8px">False</div>
<div class="t" style="left:13px;top:84.2px;color:#444">ModifiedValue</div>
<div class="t bd" style="left:61px;top:84.2px;letter-spacing:-.25px">0</div>
<div class="t" style="left:13px;top:92.6px;color:#444">OnUpdate</div>
<div class="t" style="left:61px;top:92.6px">False</div>
<div class="t" style="left:13px;top:100.9px;color:#444">TargetCollidedOnly</div>
<div class="t" style="left:61px;top:100.9px">True</div>
<div class="t" style="left:13px;top:109.3px;color:#444">TargetFilter</div>
<div class="t" style="left:13px;top:117.6px;color:#444">UnModifiedValue</div>
<div class="t bd" style="left:61px;top:117.6px;letter-spacing:-.25px">0</div>
<div class="t" style="left:13px;top:126.0px;color:#444">Value</div>
<div class="t bd" style="left:61px;top:126.0px;letter-spacing:-.25px">0</div>
<div class="abs" style="left:0;top:134.2px;width:118px;height:8.400px;background:#f4f5f8"></div>
<div class="abs" style="left:4.500px;top:137.4px;border:1.600px solid transparent;border-bottom-color:#333;border-right-color:#333;width:0;height:0"></div>
<div class="t bd" style="left:13px;top:134.4px;letter-spacing:-.3px">Script</div>
<div class="t" style="left:13px;top:142.7px;color:#444">Effect</div>
<div class="t bd" style="left:61px;top:142.7px;letter-spacing:-.25px">if (Global.Network.I</div>
</div>
<div class="abs sbv" style="left:682px;top:99px;width:9px;height:156px"></div>
<div class="abs arr" style="left:684.500px;top:102px;border-bottom:3px solid #444"></div>
<div class="abs arr" style="left:684.500px;top:249px;border-top:3px solid #444"></div>
<div class="abs thumb" style="left:682.500px;top:122px;width:8px;height:122px"></div>
<div class="abs" style="left:684.500px;top:181px;width:4px;height:1px;background:#8a8f98;box-shadow:0 2px 0 #8a8f98,0 -2px 0 #8a8f98"></div>
<div class="abs" style="left:563px;top:257.500px;width:129px;height:31px;background:#f0f0f0;border:1px solid #b4b8c0"></div>
<div class="t bd" style="left:566px;top:259.500px;letter-spacing:-.3px">Effect</div>

<!-- preview -->
<div class="t" style="left:702px;top:78.600px">Preview</div>
<div class="abs" style="left:700.500px;top:87.500px;width:240px;height:170.500px;background:#6495ed;overflow:hidden">
<svg width="240" height="171" viewBox="700.500 87.500 240 171" style="position:absolute;left:0;top:0"><g fill="#fff" style="filter:blur(3px)"><ellipse cx="774" cy="100" rx="17.5" ry="11.1" opacity="0.34"/><ellipse cx="798.4" cy="100" rx="9.5" ry="9.5" opacity="0.32"/><ellipse cx="818" cy="100" rx="9.5" ry="8.7" opacity="0.26"/><ellipse cx="836.6" cy="100" rx="7.9" ry="7.9" opacity="0.29"/><ellipse cx="848.7" cy="100" rx="5.5" ry="5.5" opacity="0.27"/><ellipse cx="752.5" cy="109" rx="10.3" ry="10.3" opacity="0.30"/><ellipse cx="752.5" cy="120.8" rx="6.3" ry="7.1" opacity="0.27"/><ellipse cx="752.5" cy="127.5" rx="5.5" ry="6.3" opacity="0.17"/><ellipse cx="865.3" cy="128.3" rx="9.5" ry="9.5" opacity="0.29"/><ellipse cx="752.5" cy="167" rx="13.5" ry="19.1" opacity="0.34"/><ellipse cx="752.5" cy="184" rx="9.5" ry="14.3" opacity="0.30"/><ellipse cx="752.5" cy="198" rx="9.5" ry="9.5" opacity="0.32"/><ellipse cx="752.5" cy="221.5" rx="9.5" ry="9.5" opacity="0.32"/><ellipse cx="752.5" cy="229.5" rx="6.3" ry="6.3" opacity="0.30"/><ellipse cx="898.5" cy="168" rx="10.3" ry="14.3" opacity="0.30"/><ellipse cx="898.5" cy="181" rx="11.1" ry="14.3" opacity="0.32"/><ellipse cx="898.5" cy="198" rx="11.1" ry="11.1" opacity="0.34"/><ellipse cx="898.5" cy="225.6" rx="6.3" ry="14.3" opacity="0.32"/><ellipse cx="862.3" cy="196" rx="6.3" ry="6.3" opacity="0.32"/><ellipse cx="864.8" cy="206.8" rx="6.3" ry="6.3" opacity="0.30"/><ellipse cx="759.7" cy="245.5" rx="5.5" ry="5.5" opacity="0.30"/><ellipse cx="770" cy="245.5" rx="6.3" ry="6.3" opacity="0.30"/><ellipse cx="786.5" cy="245.5" rx="8.7" ry="8.7" opacity="0.32"/><ellipse cx="800.3" cy="245.5" rx="7.1" ry="7.1" opacity="0.30"/><ellipse cx="819.7" cy="245.5" rx="19.1" ry="10.3" opacity="0.34"/><ellipse cx="876.4" cy="245.5" rx="12.7" ry="11.9" opacity="0.32"/><ellipse cx="890.2" cy="245.5" rx="11.9" ry="11.9" opacity="0.32"/><ellipse cx="851" cy="145.500" rx="16" ry="11" opacity="0.34" transform="rotate(-42 851 145.500)"/></g><g fill="#fff" style="filter:blur(1.600px)"><ellipse cx="774" cy="100" rx="10" ry="6" opacity="1"/><ellipse cx="798.4" cy="100" rx="5" ry="5" opacity="0.95"/><ellipse cx="818" cy="100" rx="5" ry="4.5" opacity="0.75"/><ellipse cx="836.6" cy="100" rx="4" ry="4" opacity="0.85"/><ellipse cx="848.7" cy="100" rx="2.5" ry="2.5" opacity="0.8"/><ellipse cx="752.5" cy="109" rx="5.5" ry="5.5" opacity="0.9"/><ellipse cx="752.5" cy="120.8" rx="3" ry="3.5" opacity="0.8"/><ellipse cx="752.5" cy="127.5" rx="2.5" ry="3" opacity="0.5"/><ellipse cx="783.7" cy="128.3" rx="5" ry="5" opacity="0.4"/><ellipse cx="865.3" cy="128.3" rx="5" ry="5" opacity="0.85"/><ellipse cx="898.5" cy="120.8" rx="6" ry="6" opacity="0.4"/><ellipse cx="752.5" cy="167" rx="7.5" ry="11" opacity="1"/><ellipse cx="752.5" cy="184" rx="5" ry="8" opacity="0.9"/><ellipse cx="752.5" cy="198" rx="5" ry="5" opacity="0.95"/><ellipse cx="752.5" cy="221.5" rx="5" ry="5" opacity="0.95"/><ellipse cx="752.5" cy="229.5" rx="3" ry="3" opacity="0.9"/><ellipse cx="898.5" cy="168" rx="5.5" ry="8" opacity="0.9"/><ellipse cx="898.5" cy="181" rx="6" ry="8" opacity="0.95"/><ellipse cx="898.5" cy="198" rx="6" ry="6" opacity="1"/><ellipse cx="898.5" cy="225.6" rx="3" ry="8" opacity="0.95"/><ellipse cx="862.3" cy="196" rx="3" ry="3" opacity="0.95"/><ellipse cx="864.8" cy="206.8" rx="3" ry="3" opacity="0.9"/><ellipse cx="759.7" cy="245.5" rx="2.5" ry="2.5" opacity="0.9"/><ellipse cx="770" cy="245.5" rx="3" ry="3" opacity="0.9"/><ellipse cx="786.5" cy="245.5" rx="4.5" ry="4.5" opacity="0.95"/><ellipse cx="800.3" cy="245.5" rx="3.5" ry="3.5" opacity="0.9"/><ellipse cx="819.7" cy="245.5" rx="11" ry="5.5" opacity="1"/><ellipse cx="843.2" cy="245.5" rx="6" ry="5.5" opacity="0.35"/><ellipse cx="876.4" cy="245.5" rx="7" ry="6.5" opacity="0.95"/><ellipse cx="890.2" cy="245.5" rx="6.5" ry="6.5" opacity="0.95"/><ellipse cx="794.8" cy="220" rx="4" ry="4" opacity="0.15"/><ellipse cx="752.5" cy="150" rx="4" ry="4" opacity="0.2"/><ellipse cx="760" cy="103" rx="3" ry="3" opacity="0.3"/><ellipse cx="851" cy="145.500" rx="10" ry="6.500" transform="rotate(-42 851 145.500)"/></g></svg></div>
<div class="abs btn" style="left:701.3px;top:262.500px;width:29.0px;height:11px"><span class="s">Reset</span></div>
<div class="abs btn" style="left:734.8px;top:262.500px;width:24.0px;height:11px"><span class="s">Zoom+</span></div>
<div class="abs btn" style="left:762.4px;top:262.500px;width:24.1px;height:11px"><span class="s">Zoom-</span></div>
<div class="abs btn" style="left:791.2px;top:262.500px;width:13.8px;height:11px"><span class="s">X+</span></div>
<div class="abs btn" style="left:809.5px;top:262.500px;width:13.8px;height:11px"><span class="s">X-</span></div>
<div class="abs btn" style="left:827.4px;top:262.500px;width:14.4px;height:11px"><span class="s">Y+</span></div>
<div class="abs btn" style="left:845.4px;top:262.500px;width:14.4px;height:11px"><span class="s">Y-</span></div>
<div class="abs btn" style="left:864.0px;top:262.500px;width:13.8px;height:11px"><span class="s">Z+</span></div>
<div class="abs btn" style="left:882.0px;top:262.500px;width:14.3px;height:11px"><span class="s">Z-</span></div>
<div class="abs btn" style="left:900.5px;top:262.500px;width:44.5px;height:11px;text-align:left;padding-left:3px"><span class="s">Bkg. Color</span></div>
<div class="t" style="left:741.4px;top:275.500px">Zoom:</div>
<div class="t" style="left:764.4px;top:275.500px">1000</div>
<div class="t" style="left:797.6px;top:275.500px">X:</div>
<div class="t" style="left:810px;top:275.500px">0</div>
<div class="t" style="left:834px;top:275.500px">Y:</div>
<div class="t" style="left:846px;top:275.500px">0</div>
<div class="t" style="left:871px;top:275.500px">Z:</div>
<div class="t" style="left:883.3px;top:275.500px">0</div>
<div class="t" style="left:910px;top:275.500px">Collisions</div>
<div class="abs" style="left:900.500px;top:276px;width:7px;height:7px;background:#fbfbfb;border:1px solid #b4b6b8"></div>
<div class="abs btn" style="left:867.500px;top:296px;width:38px;height:11px"><span class="s">OK</span></div>
<div class="abs btn" style="left:910px;top:296px;width:38px;height:11px;text-align:left;padding-left:7px"><span class="s">Cancel</span></div>
<!-- ===== Lua Script Editor ===== -->
<div class="abs" style="left:43px;top:338.500px;width:389.500px;height:189px;background:linear-gradient(#d4e6f5 0,#b9d3eb 4px,#a6c5e4 10px,#b3cee9 15px,#cfe0f2 40px,#d6e5f4);border:1px solid #93acc7;border-radius:4px 4px 2px 2px;box-shadow:0 1px 7px rgba(0,0,0,.6),inset 0 0 0 1px rgba(235,245,255,.75)"></div>
<div class="abs" style="left:47.500px;top:354px;width:380.500px;height:169.500px;background:#f0f0f0;border:1px solid #9fb4cb"></div>
<div class="t" style="left:49.500px;top:344.500px;color:#1e2a3c;font-size:7px;transform:scaleX(.9);text-shadow:0 0 .4px #1e2a3c">Lau Script Editor</div>
<div class="abs" style="left:394px;top:343.500px;width:16px;height:8.500px;border:1px solid #7f9bbb;border-radius:2px 0 0 2px;background:linear-gradient(#cfe0f1,#9dbbdc 50%,#8fb0d6 55%,#a9c6e4)"></div>
<div class="abs" style="left:400px;top:345.500px;width:3px;height:5px;background:#6a7a92;opacity:.7"></div>
<div class="abs" style="left:410px;top:343.500px;width:17px;height:8.500px;border:1px solid #7a3a32;border-radius:0 2px 2px 0;background:linear-gradient(#e9a99c,#d4604d 45%,#c23a26 55%,#d46a50)"></div>
<svg class="abs" style="left:415px;top:345px" width="7" height="6" viewBox="0 0 7 6"><path d="M1 .5l5 5M6 .5l-5 5" stroke="#fff" stroke-width="1.400"/></svg>
<div class="abs" style="left:54px;top:359.500px;width:368.500px;height:143px;background:#fff;border:1px solid #bcc1c9"></div>
<div class="abs code" style="left:55px;top:363.200px;width:366px">
<div class="ln"><span class="no">1</span>if <i>(</i>Global.Network.IsClient<i>)</i> and <i>(</i>not Global.Network.IsServer<i>)</i> then</div>
<div class="ln"><span class="no">2</span>    return</div>
<div class="ln"><span class="no">3</span>end</div>
<div class="ln"><span class="no">4</span></div>
<div class="ln"><span class="no">5</span>if Global.Session.Logic<i>:</i>Contains<i>(</i><b>"onhill"</b><i>)</i> or Global.Session.RoundEnded then</div>
<div class="ln"><span class="no">6</span>    return</div>
<div class="ln"><span class="no">7</span>end</div>
<div class="ln"><span class="no">8</span></div>
<div class="ln"><span class="no">9</span>if not target<i>()</i> or not target<i>()</i>.Owner then</div>
<div class="ln"><span class="no">10</span>    return</div>
<div class="ln"><span class="no">11</span>end</div>
<div class="ln"><span class="no">12</span></div>
<div class="ln"><span class="no">13</span>Global.Session.Logic<i>:</i>Set<i>(</i><b>"onhill"</b><i>,</i> target<i>())</i></div>
<div class="ln"><span class="no">14</span>Global.Session.Logic<i>:</i>Set<i>(</i><b>"onhill-time"</b><i>,</i> Global.Now<i>)</i></div>
<div class="ln"><span class="no">15</span>DrawTimedCenterText<i>(</i>target<i>()</i>.Owner.Name .. <b>' has the hill!'</b><i>,</i> <u>2000</u><i>)</i></div>
</div>
<div class="abs" style="left:76.500px;top:363.500px;width:1px;height:7px;background:#000"></div>
<div class="abs sbh" style="left:55px;top:493px;width:366.500px;height:9px"></div>
<div class="abs thumb thumbh" style="left:65px;top:493.500px;width:113px;height:8px"></div>
<div class="abs" style="left:119px;top:496px;width:5px;height:3px;border-left:1px solid #8a8f98;border-right:1px solid #8a8f98;box-shadow:inset 2px 0 0 -1px #8a8f98"></div>
<div class="abs arrh" style="left:57.500px;top:495.500px;border-right:3px solid #444"></div>
<div class="abs arrh" style="left:415px;top:495.500px;border-left:3px solid #444"></div>
<div class="abs btn" style="left:342px;top:506.500px;width:38px;height:12px;border-color:#3c7fb1;box-shadow:inset 0 0 0 1px #9fdcf5"><span class="s">OK</span></div>
<div class="abs btn" style="left:384.500px;top:506.500px;width:38px;height:12px"><span class="s">Cancel</span></div>
<!--NEXT-->
</div></body></html>
